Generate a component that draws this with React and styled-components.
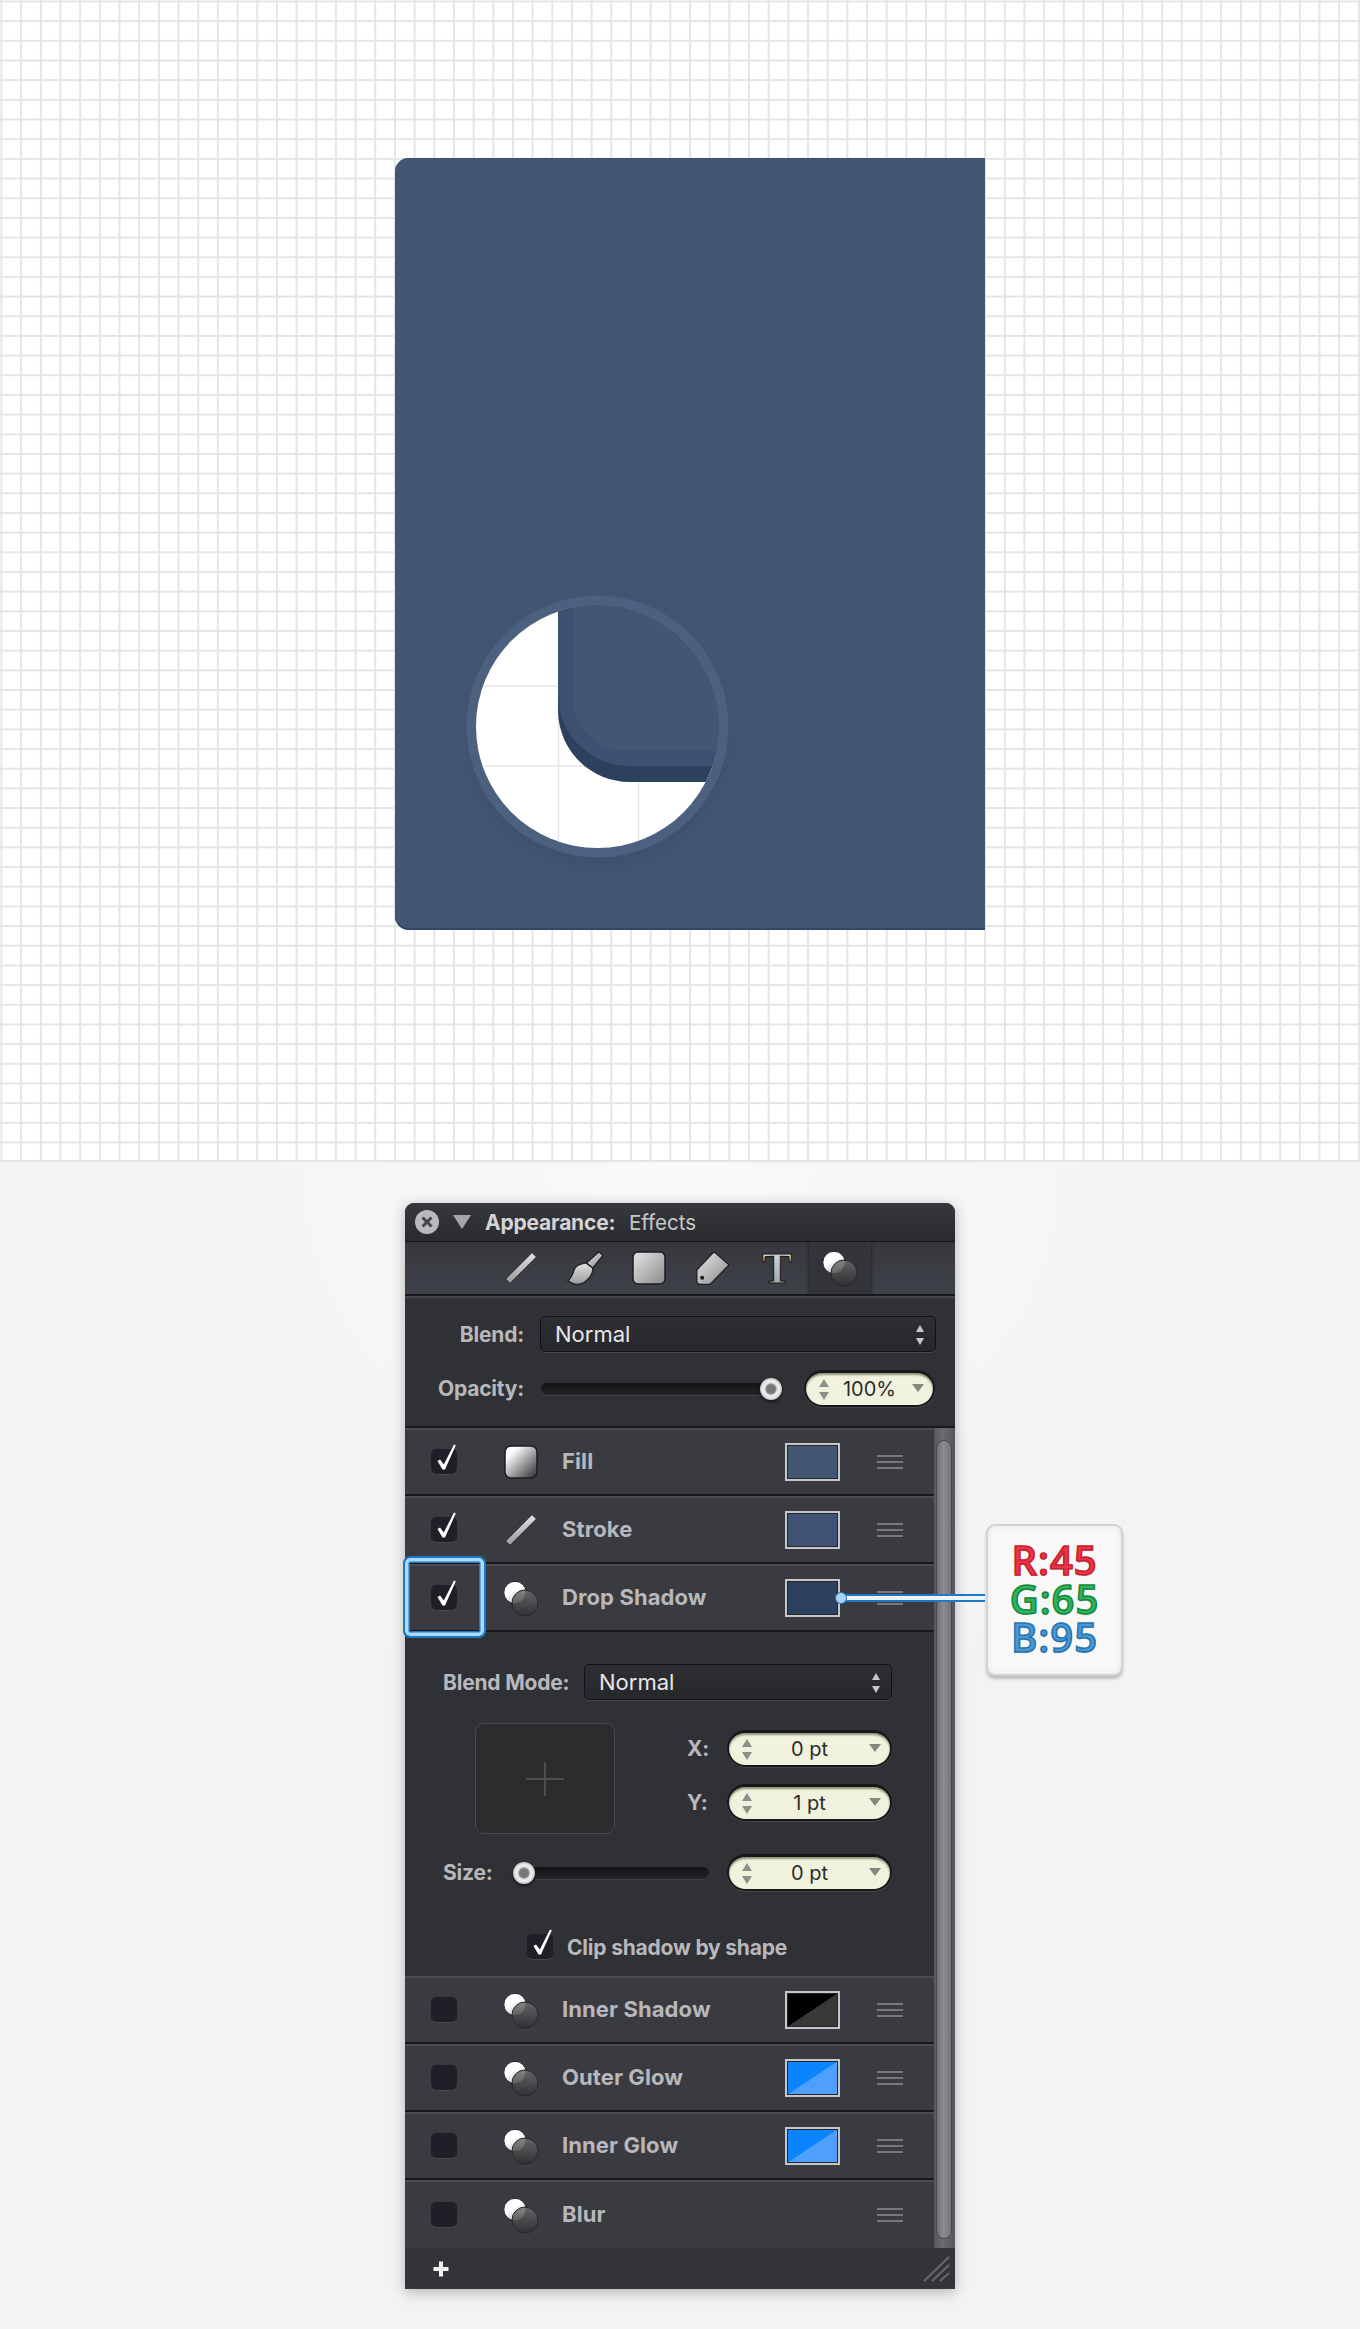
import styled, { createGlobalStyle } from "styled-components"

const GlobalStyle = createGlobalStyle`
    html, body {
        margin: 0;
        padding: 0;
        background: #f4f4f4;
    }
    body {
        font-family: Inter, "Liberation Sans", sans-serif;
    }
    * {
        box-sizing: border-box;
    }
`

const Page = styled.div`
    width: 1360px;
    height: 2329px;
    overflow: hidden;
`

/* ---- top artwork ---- */

const Canvas = styled.section`
    height: 1162px;
    padding: 158px 0 0 395px;
    background-color: #fff;
    background-image:
        linear-gradient(to right, #e5e5e8 1.5px, transparent 1.5px),
        linear-gradient(to bottom, #e5e5e8 1.5px, transparent 1.5px);
    background-size: 19.686px 19.686px;
    background-position: 0.5px 0.5px;
    border-bottom: 2px solid #e3e3e6;
`

const Artboard = styled.div`
    position: relative;
    width: 590px;
    height: 772px;
    background: #435672;
    border-radius: 14px 0 0 14px;
    box-shadow: inset 0 -2px 0 #32466a, inset 0 1px 0 #3b4e6c;
`

const Magnifier = styled.svg`
    position: absolute;
    left: 70px;
    top: 436px;
    overflow: visible;
`

const MagnifierArt = () => (
    <Magnifier width="265" height="265" viewBox="0 0 265 265">
        <defs>
            <clipPath id="lens">
                <circle cx="132.5" cy="132.5" r="121.5" />
            </clipPath>
            <filter id="lensShadow" x="-30%" y="-30%" width="160%" height="160%">
                <feGaussianBlur stdDeviation="10" />
            </filter>
        </defs>
        <circle cx="132.5" cy="142" r="130" fill="#2d415f" opacity="0.3" filter="url(#lensShadow)" />
        <circle cx="132.5" cy="132.5" r="131" fill="#4c617f" />
        <g clipPath="url(#lens)">
            <rect width="265" height="265" fill="#fff" />
            <path d="M0 92H265M0 172H265M93.500 0V265M173.500 0V265" stroke="#e6e6e8" strokeWidth="1.500" />
            <path d="M93 -5H290V188H165C125 188 93 156 93 116Z" fill="#2d415f" />
            <path d="M93 -5H290V172H165C125 172 93 140 93 100Z" fill="#3e5170" />
            <path d="M109 -5H290V156.500H159C131 156.500 109 134 109 106Z" fill="#435672" />
        </g>
    </Magnifier>
)

/* ---- lower area with the panel ---- */

const Lower = styled.section`
    position: relative;
    height: 1167px;
    padding: 41px 0 0 405px;
    background: radial-gradient(ellipse 620px 560px at 50% 0, #f9f9f9, #f3f3f3);
`

const Panel = styled.div`
    position: relative;
    display: flex;
    flex-direction: column;
    width: 550px;
    height: 1086px;
    background: #303135;
    border-radius: 9px 9px 0 0;
    box-shadow: 0 3px 14px rgba(0, 0, 0, 0.28);
`

const TitleBar = styled.header`
    display: flex;
    align-items: center;
    height: 39px;
    padding: 0 0 0 10px;
    background: linear-gradient(#37383c, #2a2b2f);
    border-radius: 9px 9px 0 0;
    border-bottom: 1px solid #18191b;
    font-size: 20.5px;
    color: #c9c9cc;
`

const CloseButton = styled.svg`
    margin-right: 14px;
`

const Disclosure = styled.span`
    width: 0;
    height: 0;
    margin-right: 14px;
    border-left: 9px solid transparent;
    border-right: 9px solid transparent;
    border-top: 14px solid #a6a6a9;
`

const TitleStrong = styled.strong`
    width: 130px;
    margin-right: 14px;
    font-size: 21px;
    font-weight: 700;
    letter-spacing: -0.2px;
    white-space: nowrap;
    color: #d4d4d6;
`

const Toolbar = styled.nav`
    display: flex;
    height: 54px;
    margin-bottom: 2px;
    padding-left: 84px;
    background: linear-gradient(#36383d, #40424a);
    border-bottom: 2px solid #18191b;
    box-shadow: 0 2px 0 #45464b;
`

const ToolButton = styled.div`
    display: flex;
    align-items: center;
    justify-content: center;
    width: ${p => p.$active ? "62px" : "64px"};
    background: ${p => p.$active ? "#33343a" : "transparent"};
    box-shadow: ${p => p.$active ? "-2px 0 2px -1px #26272a, 2px 0 2px -1px #26272a" : "none"};
`

const BlendArea = styled.div`
    display: flex;
    flex-direction: column;
    gap: 18px;
    height: 130px;
    padding: 18px 19px 0 0;
    border-bottom: 2px solid #18191b;
`

const FieldRow = styled.div`
    display: flex;
    align-items: center;
    margin-top: ${p => p.$mt || 0}px;
`

const FieldLabel = styled.label`
    flex: none;
    width: ${p => p.$width}px;
    margin-left: ${p => p.$ml || 0}px;
    text-align: ${p => p.$left ? "left" : "right"};
    font-size: 21px;
    font-weight: 700;
    letter-spacing: -0.2px;
    white-space: nowrap;
    color: #b8b8bc;
`

const Select = styled.div`
    position: relative;
    display: flex;
    align-items: center;
    flex: ${p => p.$width ? "none" : 1};
    width: ${p => p.$width ? `${p.$width}px` : "auto"};
    height: 36px;
    margin-left: ${p => p.$ml || 0}px;
    padding-left: 14px;
    background: linear-gradient(#2e2f33, #26272a);
    border: 1.5px solid #121214;
    border-radius: 5px;
    box-shadow: 0 1px 0 #47484c;
    font-size: 22px;
    color: #e6e6e8;
`

const SelectArrows = styled.span`
    position: absolute;
    right: 11px;
    top: 8px;
    display: flex;
    flex-direction: column;
    gap: 6px;
`

const Tri = styled.i`
    display: block;
    width: 0;
    height: 0;
    border-left: ${p => p.$w / 2}px solid transparent;
    border-right: ${p => p.$w / 2}px solid transparent;
    border-bottom: ${p => p.$up ? `${p.$h}px solid ${p.$c}` : "none"};
    border-top: ${p => p.$up ? "none" : `${p.$h}px solid ${p.$c}`};
`

const SliderTrack = styled.div`
    position: relative;
    flex: none;
    width: ${p => p.$width}px;
    height: 12px;
    margin-left: ${p => p.$ml || 0}px;
    background: linear-gradient(#111213, #232427);
    border-radius: 6px;
    box-shadow: 0 1px 0 #3f4044;
`

const SliderThumb = styled.span`
    position: absolute;
    top: -5px;
    left: ${p => p.$left}px;
    width: 22px;
    height: 22px;
    border-radius: 50%;
    background: radial-gradient(circle, #77777a 0 4px, #8f8f92 5px, #dcdcde 6px, #f0f0f0 8px, #c2c2c4 11px);
    box-shadow: 0 2px 3px rgba(0, 0, 0, 0.55);
`

const StepperBox = styled.div`
    position: relative;
    display: flex;
    align-items: center;
    justify-content: center;
    flex: none;
    width: ${p => p.$width}px;
    height: 37px;
    margin-left: ${p => p.$ml || 0}px;
    background: #f0f2de;
    border: 2px solid #17181a;
    border-top-width: 3px;
    border-radius: 19px;
    box-shadow: inset 0 2px 2px rgba(90, 90, 60, 0.65), 0 1px 0 #47484c;
    font-size: 20px;
    color: #2c2c2c;
`

const StepArrows = styled.span`
    position: absolute;
    left: 13px;
    top: 6px;
    display: flex;
    flex-direction: column;
    gap: 5px;
`

const StepMenu = styled.span`
    position: absolute;
    right: 9px;
    top: 11px;
`

const Stepper = ({ value, width, ml }) => (
    <StepperBox $width={width} $ml={ml}>
        <StepArrows>
            <Tri $up $w={10} $h={8} $c="#8e8f88" />
            <Tri $w={10} $h={8} $c="#8e8f88" />
        </StepArrows>
        {value}
        <StepMenu><Tri $w={12} $h={8} $c="#85867e" /></StepMenu>
    </StepperBox>
)

/* ---- effect rows ---- */

const ListWrap = styled.div`
    display: flex;
    flex: none;
`

const List = styled.div`
    flex: 1;
    min-width: 0;
`

const Row = styled.div`
    position: relative;
    display: flex;
    align-items: center;
    height: 68px;
    padding: 0 31px 0 26px;
    background: #3a3b40;
    border-top: 2px solid #4b4c51;
    border-bottom: ${p => p.$last ? "none" : "2px solid #17181a"};
`

const CheckBox = styled.span`
    position: relative;
    flex: none;
    width: 26px;
    height: 25px;
    margin-top: -2px;
    background: #1f2027;
    border-radius: 5px;
    box-shadow: 0 1px 0 #47484d;
`

const CheckMark = styled.svg`
    position: absolute;
    left: 0;
    top: 0;
    overflow: visible;
`

const Check = ({ on }) => (
    <CheckBox>
        {on && (
            <CheckMark width="26" height="25" viewBox="0 0 26 25">
                <path d="M6.500 12L9 10.500L12.800 15.500L23 -4.500L24.800 -3.800L14 20.500H11.500Z" fill="#fff" />
            </CheckMark>
        )}
    </CheckBox>
)

const IconSlot = styled.span`
    display: flex;
    justify-content: center;
    flex: none;
    width: 36px;
    margin: 0 23px 0 46px;
`

const RowName = styled.span`
    flex: 1;
    margin-top: -3px;
    font-size: 22px;
    font-weight: 700;
    letter-spacing: 0.1px;
    color: #b8b8bc;
`

const Swatch = styled.span`
    flex: none;
    width: 55px;
    height: 38px;
    margin-right: 37px;
    background: ${p => p.$fill};
    border: 2px solid #c6c6c8;
    box-shadow: inset 0 0 0 1px #26272a;
`

const Handle = styled.span`
    display: flex;
    flex-direction: column;
    gap: 4px;
    flex: none;
    width: 26px;

    i {
        display: block;
        height: 2px;
        background: #77787c;
    }
`

const Highlight = styled.span`
    position: absolute;
    left: -2px;
    top: -10px;
    width: 83px;
    height: 82px;
    border: 2px solid #1b78c6;
    border-radius: 7px;
    box-shadow: inset 0 0 0 3.500px #a9d9fb, inset 0 0 0 5px #1b78c6;
    z-index: 2;
`

const ShadowControls = styled.div`
    display: flex;
    flex-direction: column;
    height: 344px;
    background: #303135;
`

const OffsetRow = styled.div`
    display: flex;
    margin-top: 23px;
`

const OriginBox = styled.div`
    display: flex;
    align-items: center;
    justify-content: center;
    flex: none;
    width: 140px;
    height: 111px;
    margin-left: 70px;
    background: #2c2c2f;
    border: 1.5px solid #49494d;
    border-radius: 9px;
`

const OffsetFields = styled.div`
    display: flex;
    flex-direction: column;
    gap: 17px;
    margin: 7px 0 0 72px;
`

const ClipRow = styled.div`
    display: flex;
    align-items: center;
    gap: 14px;
    margin: 44px 0 0 122px;
    font-size: 21px;
    font-weight: 700;
    letter-spacing: -0.2px;
    color: #b8b8bc;
`

const Gutter = styled.div`
    flex: none;
    width: 21px;
    padding: 12px 3px 9px 2px;
    background: linear-gradient(to right, #58595c, #6b6c6f 40%, #55565a);
`

const GutterThumb = styled.div`
    height: 100%;
    border-radius: 8px;
    border: 1.5px solid #48494c;
    background: linear-gradient(to right, #6d6e70, #8b8c8e 45%, #737477);
`

const Footer = styled.footer`
    position: relative;
    display: flex;
    align-items: center;
    flex: 1;
    padding-left: 27px;
    background: #333438;
`

const Grip = styled.svg`
    position: absolute;
    right: 5px;
    bottom: 7px;
`

/* ---- callout ---- */

const Connector = styled.span`
    position: absolute;
    left: 436px;
    top: 391px;
    width: 144px;
    height: 8px;
    background: linear-gradient(#1f78c4 0 2px, #eaf5fd 2px 6px, #1f78c4 6px);
    z-index: 2;
`

const ConnectorDot = styled.span`
    position: absolute;
    left: -6px;
    top: -2px;
    width: 12px;
    height: 12px;
    border-radius: 50%;
    background: #a9d4f7;
    border: 1px solid #1f78c4;
`

const ValueCard = styled.aside`
    position: absolute;
    left: 581px;
    top: 321px;
    display: flex;
    flex-direction: column;
    align-items: center;
    width: 137px;
    height: 152px;
    padding-top: 15px;
    background: #f8f8f8;
    border: 2px solid #d2d2d2;
    border-radius: 9px;
    box-shadow: 0 3px 3px rgba(0, 0, 0, 0.22), inset 0 0 7px rgba(0, 0, 0, 0.07);
    z-index: 3;
`

const ValueLine = styled.div`
    height: 38.500px;
    line-height: 38px;
    font-family: "Open Sans", sans-serif;
    font-size: 40px;
    font-weight: 600;
    letter-spacing: 1px;
    color: ${p => p.$fill};
    -webkit-text-stroke: 1.5px ${p => p.$edge};
    text-shadow: 0 1px 1px rgba(0, 0, 0, 0.25);
`

/* ---- icons ---- */

const IconDefs = () => (
    <svg width="0" height="0" style={{ position: "absolute" }}>
        <defs>
            <linearGradient id="metal" x1="0" y1="0" x2="1" y2="1">
                <stop offset="0" stopColor="#e6e6e6" />
                <stop offset="1" stopColor="#8a8a8a" />
            </linearGradient>
            <linearGradient id="metalV" x1="0" y1="0" x2="0" y2="1">
                <stop offset="0" stopColor="#e2e2e2" />
                <stop offset="1" stopColor="#9a9a9a" />
            </linearGradient>
            <linearGradient id="fillIcon" x1="0" y1="0" x2="1" y2="1">
                <stop offset="0.2" stopColor="#fff" />
                <stop offset="1" stopColor="#2b2b2b" />
            </linearGradient>
            <linearGradient id="ballWhite" x1="0" y1="0" x2="0.6" y2="1">
                <stop offset="0.5" stopColor="#fff" />
                <stop offset="1" stopColor="#bdbdbd" />
            </linearGradient>
            <linearGradient id="ballDark" x1="0" y1="0" x2="0" y2="1">
                <stop offset="0" stopColor="#6e6e71" />
                <stop offset="1" stopColor="#2e2e30" />
            </linearGradient>
        </defs>
    </svg>
)

const LineIcon = () => (
    <svg width="34" height="34" viewBox="0 0 34 34">
        <path d="M1.500 28L28 1.500L32.500 6L6 32.500Z" fill="url(#metalV)" stroke="#1c1d20" strokeWidth="1" strokeLinejoin="round" />
    </svg>
)

const BrushIcon = () => (
    <svg width="38" height="36" viewBox="-1 -1 38 36">
        <path d="M19 12C14 13 9 14 7.500 18C6 22 5 27 .8 29.500C4 33 11 35 17 31.500C22 28 26 23 25.800 17Z" fill="url(#metalV)" stroke="#1c1d20" strokeWidth="1.200" strokeLinejoin="round" />
        <path d="M19.500 12L32 .8L36 4.500L25.800 17Z" fill="url(#metal)" stroke="#1c1d20" strokeWidth="1.200" strokeLinejoin="round" />
    </svg>
)

const SquareIcon = () => (
    <svg width="34" height="34" viewBox="0 0 34 34">
        <rect x="1" y="1" width="32" height="32" rx="5" fill="url(#metal)" stroke="#1c1d20" strokeWidth="1.500" />
    </svg>
)

const TagIcon = () => (
    <svg width="34" height="34" viewBox="0 0 33 33">
        <path d="M17.500 .8L32 13.500L15 31C14 32 13 32.500 12 32.500H4C2 32.500 .8 31 .8 29V20C.8 19 1 18.200 1.800 17.400Z" fill="url(#metal)" stroke="#1c1d20" strokeWidth="1.200" strokeLinejoin="round" />
        <circle cx="6" cy="26" r="2" fill="#1c1d20" />
    </svg>
)

const TypeIcon = () => (
    <svg width="34" height="34" viewBox="0 0 34 34" overflow="visible">
        <text x="17" y="32" textAnchor="middle" fontFamily="Liberation Serif, serif" fontSize="45" fontWeight="700" fill="url(#metalV)" stroke="#1c1d20" strokeWidth="1.200">T</text>
    </svg>
)

const BallsIcon = () => (
    <svg width="36" height="37" viewBox="0 0 36 37">
        <circle cx="12" cy="12.500" r="11.200" fill="url(#ballWhite)" stroke="#1c1d20" strokeWidth="1" />
        <circle cx="22" cy="23" r="13" fill="url(#ballDark)" fillOpacity="0.82" stroke="#26272a" strokeWidth="1" />
    </svg>
)

const FillIcon = () => (
    <svg width="34" height="34" viewBox="0 0 34 34">
        <rect x="1" y="1" width="32" height="32" rx="6" fill="url(#fillIcon)" stroke="#1c1d20" strokeWidth="1.500" />
    </svg>
)

const effects = [
    { name: "Inner Shadow", swatch: "linear-gradient(to bottom right, #000 50%, #383836 50%)" },
    { name: "Outer Glow", swatch: "linear-gradient(to bottom right, #0a84ff 50%, #4f9fff 50%)" },
    { name: "Inner Glow", swatch: "linear-gradient(to bottom right, #0a84ff 50%, #4f9fff 50%)" },
    { name: "Blur" },
]

const EffectRow = ({ on, icon, name, swatch, last, children }) => (
    <Row $last={last}>
        {children}
        <Check on={on} />
        <IconSlot>{icon}</IconSlot>
        <RowName>{name}</RowName>
        {swatch && <Swatch $fill={swatch} />}
        <Handle><i /><i /><i /></Handle>
    </Row>
)

const SelectBox = ({ width, ml }) => (
    <Select $width={width} $ml={ml}>
        Normal
        <SelectArrows>
            <Tri $up $w={9} $h={7} $c="#c8c8ca" />
            <Tri $w={9} $h={7} $c="#c8c8ca" />
        </SelectArrows>
    </Select>
)

const App = () => {
    return (
        <Page>
            <GlobalStyle />
            <IconDefs />
            <Canvas>
                <Artboard>
                    <MagnifierArt />
                </Artboard>
            </Canvas>
            <Lower>
                <Panel>
                    <TitleBar>
                        <CloseButton width="24" height="24" viewBox="0 0 24 24">
                            <circle cx="12" cy="12" r="12" fill="#b9b9bb" />
                            <path d="M7.500 7.500L16.500 16.500M16.500 7.500L7.500 16.500" stroke="#46474b" strokeWidth="3" />
                        </CloseButton>
                        <Disclosure />
                        <TitleStrong>Appearance:</TitleStrong>
                        <span>Effects</span>
                    </TitleBar>
                    <Toolbar>
                        <ToolButton><LineIcon /></ToolButton>
                        <ToolButton><BrushIcon /></ToolButton>
                        <ToolButton><SquareIcon /></ToolButton>
                        <ToolButton><TagIcon /></ToolButton>
                        <ToolButton><TypeIcon /></ToolButton>
                        <ToolButton $active><BallsIcon /></ToolButton>
                    </Toolbar>
                    <BlendArea>
                        <FieldRow>
                            <FieldLabel $width={119}>Blend:</FieldLabel>
                            <SelectBox ml={16} />
                        </FieldRow>
                        <FieldRow>
                            <FieldLabel $width={119}>Opacity:</FieldLabel>
                            <SliderTrack $width={242} $ml={17}>
                                <SliderThumb $left={219} />
                            </SliderTrack>
                            <Stepper value="100%" width={131} ml={21} />
                        </FieldRow>
                    </BlendArea>
                    <ListWrap>
                        <List>
                            <EffectRow on icon={<FillIcon />} name="Fill" swatch="#435672" />
                            <EffectRow on icon={<LineIcon />} name="Stroke" swatch="#3f5272" />
                            <EffectRow on icon={<BallsIcon />} name="Drop Shadow" swatch="#2d415f">
                                <Highlight />
                            </EffectRow>
                            <ShadowControls>
                                <FieldRow $mt={32}>
                                    <FieldLabel $width={141} $left $ml={38}>Blend Mode:</FieldLabel>
                                    <SelectBox width={308} />
                                </FieldRow>
                                <OffsetRow>
                                    <OriginBox>
                                        <svg width="38" height="34" viewBox="0 0 38 34">
                                            <path d="M0 17H38M19 0V34" stroke="#5a5a5e" strokeWidth="1.500" />
                                        </svg>
                                    </OriginBox>
                                    <OffsetFields>
                                        <FieldRow>
                                            <FieldLabel $width={40} $left>X:</FieldLabel>
                                            <Stepper value="0 pt" width={165} />
                                        </FieldRow>
                                        <FieldRow>
                                            <FieldLabel $width={40} $left>Y:</FieldLabel>
                                            <Stepper value="1 pt" width={165} />
                                        </FieldRow>
                                    </OffsetFields>
                                </OffsetRow>
                                <FieldRow $mt={20}>
                                    <FieldLabel $width={70} $left $ml={38}>Size:</FieldLabel>
                                    <SliderTrack $width={196}>
                                        <SliderThumb $left={0} />
                                    </SliderTrack>
                                    <Stepper value="0 pt" width={165} ml={18} />
                                </FieldRow>
                                <ClipRow>
                                    <Check on />
                                    Clip shadow by shape
                                </ClipRow>
                            </ShadowControls>
                            {effects.map((fx, i) => (
                                <EffectRow
                                    key={fx.name}
                                    icon={<BallsIcon />}
                                    name={fx.name}
                                    swatch={fx.swatch}
                                    last={i === effects.length - 1}
                                />
                            ))}
                        </List>
                        <Gutter>
                            <GutterThumb />
                        </Gutter>
                    </ListWrap>
                    <Footer>
                        <svg width="18" height="18" viewBox="0 0 18 18">
                            <path d="M9 1.500V16.500M1.500 9H16.500" stroke="#f2f2f2" strokeWidth="4" />
                        </svg>
                        <Grip width="27" height="26" viewBox="0 0 27 26">
                            <path d="M1 25L26 1M9 25L26 9M17 25L26 17" stroke="#66676b" strokeWidth="2" />
                        </Grip>
                    </Footer>
                    <Connector>
                        <ConnectorDot />
                    </Connector>
                    <ValueCard>
                        <ValueLine $fill="#ee3344" $edge="#c5202f">R:45</ValueLine>
                        <ValueLine $fill="#2fb35c" $edge="#14893c">G:65</ValueLine>
                        <ValueLine $fill="#4a97d4" $edge="#2573b0">B:95</ValueLine>
                    </ValueCard>
                </Panel>
            </Lower>
        </Page>
    )
}

export default App
